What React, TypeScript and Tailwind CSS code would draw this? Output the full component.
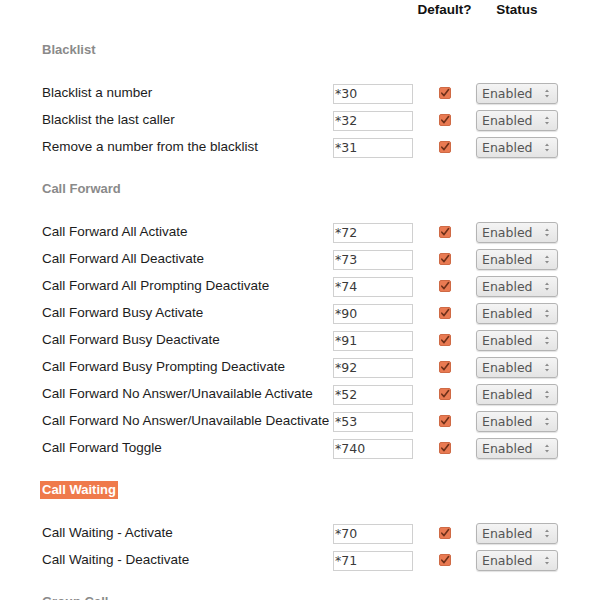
import React from "react";

type Row = { label: string; code: string };
type Section = { title: string; highlight?: boolean; rows: Row[] };

const sections: Section[] = [
  {
    title: "Blacklist",
    rows: [
      { label: "Blacklist a number", code: "*30" },
      { label: "Blacklist the last caller", code: "*32" },
      { label: "Remove a number from the blacklist", code: "*31" },
    ],
  },
  {
    title: "Call Forward",
    rows: [
      { label: "Call Forward All Activate", code: "*72" },
      { label: "Call Forward All Deactivate", code: "*73" },
      { label: "Call Forward All Prompting Deactivate", code: "*74" },
      { label: "Call Forward Busy Activate", code: "*90" },
      { label: "Call Forward Busy Deactivate", code: "*91" },
      { label: "Call Forward Busy Prompting Deactivate", code: "*92" },
      { label: "Call Forward No Answer/Unavailable Activate", code: "*52" },
      { label: "Call Forward No Answer/Unavailable Deactivate", code: "*53" },
      { label: "Call Forward Toggle", code: "*740" },
    ],
  },
  {
    title: "Call Waiting",
    highlight: true,
    rows: [
      { label: "Call Waiting - Activate", code: "*70" },
      { label: "Call Waiting - Deactivate", code: "*71" },
    ],
  },
  {
    title: "Group Call",
    rows: [],
  },
];

function Check() {
  return (
    <div className="w-[12px] h-[12px] -mt-[2px] rounded-[2px] bg-[#e97a52] border border-[#cf6a45] flex items-center justify-center">
      <svg width="10" height="10" viewBox="0 0 10 10">
        <path d="M1.8 5.2 L4 7.6 L8.6 1.6" fill="none" stroke="#6e3019" strokeWidth="1.6" strokeLinecap="round" strokeLinejoin="round" />
      </svg>
    </div>
  );
}

function Select() {
  return (
    <div className="w-[82px] h-[21px] rounded-[3px] border border-[#b4b4b4] bg-gradient-to-b from-[#f4f4f4] to-[#e4e4e4] shadow-[0_1px_1px_rgba(0,0,0,0.12)] flex items-center justify-between pl-[5px] pr-[7px]">
      <span className="text-[12.5px] text-[#555] leading-none pt-[1px]" style={{ fontFamily: '"DejaVu Sans", sans-serif' }}>Enabled</span>
      <svg width="6" height="11" viewBox="0 0 6 11">
        <path d="M3 1.5 L5 4 L1 4 Z" fill="#8a8a8a" />
        <path d="M3 9.5 L5 7 L1 7 Z" fill="#8a8a8a" />
      </svg>
    </div>
  );
}

export default function App() {
  return (
    <div className="w-[600px] h-[600px] overflow-hidden bg-white pl-[42px]" style={{ fontFamily: '"Liberation Sans", Arial, sans-serif' }}>
      <div className="flex h-[20px] items-center text-[13.5px] font-bold text-[#111]">
        <div className="w-[291px]" />
        <div className="w-[80px]" />
        <div className="w-[63px] text-center">Default?</div>
        <div className="w-[82px] text-center">Status</div>
      </div>
      {sections.map((s, i) => (
        <div key={s.title} className={i === 0 ? "mt-[21px]" : "mt-[19px]"}>
          <div className="h-[18px] flex items-center">
            {s.highlight ? (
              <span className="-ml-[2px] px-[2px] h-[18px] flex items-center bg-[#ef7a4b] text-white text-[13px] font-bold">{s.title}</span>
            ) : (
              <span className="text-[13px] font-bold text-[#8a8a8a]">{s.title}</span>
            )}
          </div>
          <div className="mt-[21px]">
            {s.rows.map((r) => (
              <div key={r.label} className="flex h-[27px] items-center">
                <div className="w-[291px] text-[13.5px] text-[#1c1c1c] whitespace-nowrap -mt-[1px]">{r.label}</div>
                <div className="w-[80px] h-[20px] border border-[#d0d0d0] bg-white flex items-center pl-[1px]">
                  <span className="text-[12.5px] text-[#3a3a3a] leading-none pt-[1px]" style={{ fontFamily: '"DejaVu Sans", sans-serif' }}>{r.code}</span>
                </div>
                <div className="w-[63px] flex pl-[26px]">
                  <Check />
                </div>
                <Select />
              </div>
            ))}
          </div>
        </div>
      ))}
    </div>
  );
}
